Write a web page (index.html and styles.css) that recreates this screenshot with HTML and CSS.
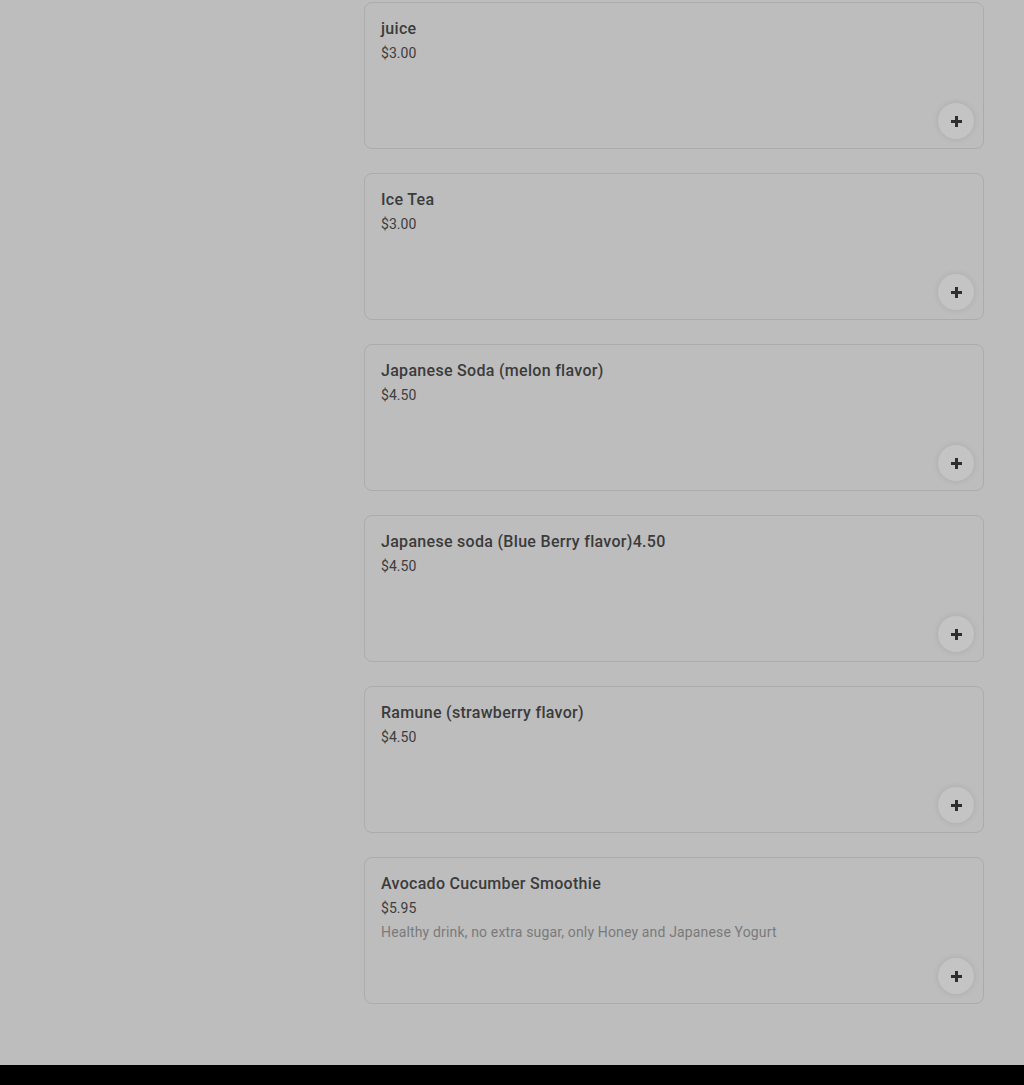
FILE: index.html
```html
<!DOCTYPE html>
<html lang="en">
<head>
    <meta charset="UTF-8">
    <meta name="viewport" content="width=device-width, initial-scale=1.0">
    <title>Menu - Drinks</title>
    <link rel="stylesheet" href="styles.css">
</head>
<body>
    <main class="menu">
        <ul class="items">
            <li class="item">
                <h3>juice</h3>
                <p class="price">$3.00</p>
                <button class="add" aria-label="Add juice"><span class="plus"></span></button>
            </li>
            <li class="item">
                <h3>Ice Tea</h3>
                <p class="price">$3.00</p>
                <button class="add" aria-label="Add Ice Tea"><span class="plus"></span></button>
            </li>
            <li class="item">
                <h3>Japanese Soda (melon flavor)</h3>
                <p class="price">$4.50</p>
                <button class="add" aria-label="Add Japanese Soda"><span class="plus"></span></button>
            </li>
            <li class="item">
                <h3>Japanese soda (Blue Berry flavor)4.50</h3>
                <p class="price">$4.50</p>
                <button class="add" aria-label="Add Japanese soda"><span class="plus"></span></button>
            </li>
            <li class="item">
                <h3>Ramune (strawberry flavor)</h3>
                <p class="price">$4.50</p>
                <button class="add" aria-label="Add Ramune"><span class="plus"></span></button>
            </li>
            <li class="item">
                <h3>Avocado Cucumber Smoothie</h3>
                <p class="price">$5.95</p>
                <p class="desc">Healthy drink, no extra sugar, only Honey and Japanese Yogurt</p>
                <button class="add" aria-label="Add Avocado Cucumber Smoothie"><span class="plus"></span></button>
            </li>
        </ul>
    </main>
    <footer class="footer"></footer>
</body>
</html>
```

FILE: styles.css
```css
* {
    margin: 0;
    padding: 0;
    box-sizing: border-box;
}

body {
    background-color: #bdbdbd;
    font-family: Roboto, 'Noto Sans', sans-serif;
    color: #333;
}

.menu {
    padding: 2px 40px 61px 364px;
}

.items {
    list-style: none;
    width: 620px;
    display: flex;
    flex-direction: column;
    gap: 24px;
}

.item {
    position: relative;
    height: 147px;
    padding: 16px;
    border: 1px solid #acacac;
    border-radius: 8px;
}

.item h3 {
    font-size: 16px;
    font-weight: 500;
    line-height: 20px;
    letter-spacing: 0.3px;
    color: #3b3b3b;
}

.price {
    margin-top: 4px;
    font-size: 14px;
    line-height: 20px;
    letter-spacing: 0.05px;
    color: #3e3e3e;
}

.desc {
    margin-top: 4px;
    font-size: 14px;
    line-height: 20px;
    letter-spacing: 0.15px;
    color: #7a7a7a;
}

.add {
    position: absolute;
    right: 9px;
    bottom: 9px;
    width: 36px;
    height: 36px;
    border: none;
    border-radius: 50%;
    background-color: #c4c4c4;
    box-shadow: 0 0 6px rgba(0, 0, 0, 0.1);
    cursor: pointer;
    display: flex;
    align-items: center;
    justify-content: center;
}

.plus {
    position: relative;
    width: 11px;
    height: 11px;
}

.plus::before,
.plus::after {
    content: "";
    position: absolute;
    background-color: #2e2e2e;
}

.plus::before {
    left: 4px;
    top: 0;
    width: 3px;
    height: 11px;
}

.plus::after {
    left: 0;
    top: 4px;
    width: 11px;
    height: 3px;
}

.footer {
    height: 20px;
    background-color: #000;
}
```
